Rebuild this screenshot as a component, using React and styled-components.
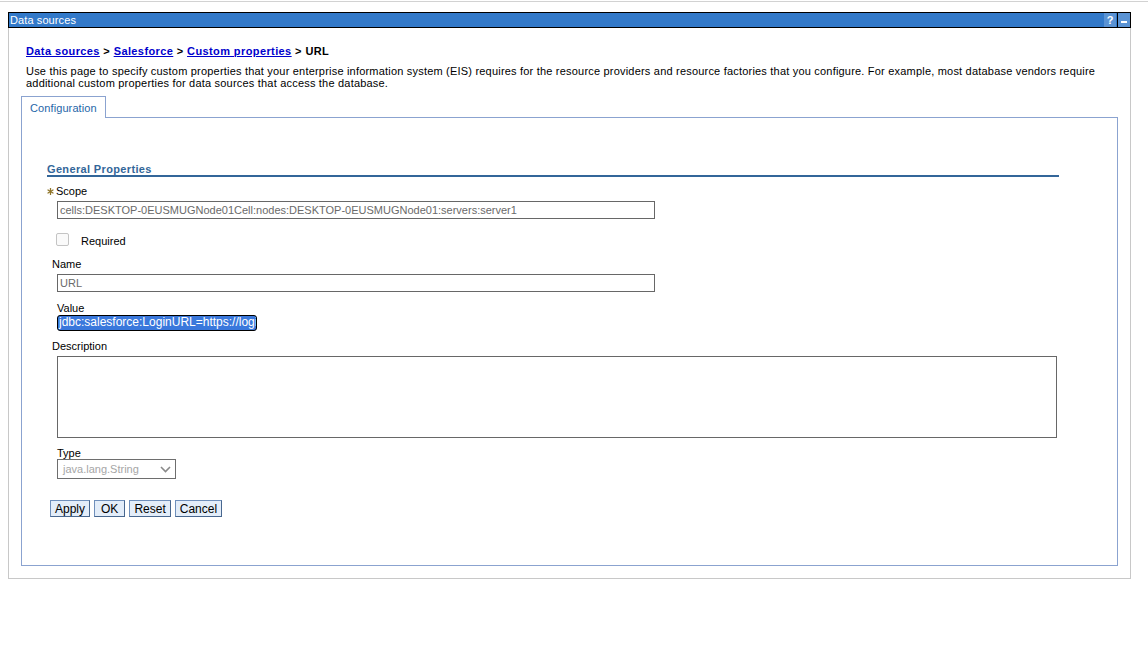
import React from 'react'
import styled, { createGlobalStyle } from 'styled-components'

const GlobalStyle = createGlobalStyle`
    body {
        margin: 0;
        background: #ffffff;
        font-family: Tahoma, 'Liberation Sans', Arial, sans-serif;
        font-size: 11px;
        line-height: 12px;
        color: #000000;
    }
`;

const TopRule = styled.div`
    margin-top: 1px;
    height: 1px;
    background: #d2d2d2;
`;

const Portlet = styled.div`
    margin: 10px 0 0 8px;
    width: 1123px;
`;

const TitleBar = styled.div`
    height: 16px;
    box-sizing: border-box;
    background: #3279c9;
    border: 1px solid #000000;
    display: flex;
    align-items: center;
    justify-content: space-between;
    color: #ffffff;
    padding-left: 1px;
`;

const TitleText = styled.span`
    font-size: 11px;
    letter-spacing: 0.1px;
`;

const TitleIcons = styled.div`
    display: flex;
    height: 100%;
    align-items: stretch;
`;

const TitleIcon = styled.div`
    width: 12px;
    background: #5a93d4;
    color: #ffffff;
    font-weight: bold;
    font-size: 11px;
    display: flex;
    align-items: ${p => (p.$bottom ? 'flex-end' : 'center')};
    justify-content: center;
    border-left: ${p => (p.$divider ? '1px solid #000' : 'none')};
    margin-left: ${p => (p.$divider ? '1px' : '0')};
`;

const Dash = styled.div`
    width: 6px;
    height: 2px;
    background: #ffffff;
    margin-bottom: 4px;
`;

const Body = styled.div`
    border: 1px solid #c8c8c8;
    border-top: none;
    padding: 17px 12px 12px 12px;
`;

const Crumbs = styled.div`
    margin-left: 5px;
    font-weight: bold;
    letter-spacing: 0.4px;
`;

const CrumbLink = styled.a`
    color: #0000cc;
    text-decoration: underline;
    cursor: pointer;
`;

const Intro = styled.p`
    margin: 8px 0 0 5px;
    letter-spacing: 0.2px;
`;

const TabRow = styled.div`
    display: flex;
    margin-top: 7px;
`;

const Tab = styled.div`
    position: relative;
    z-index: 1;
    width: 85px;
    height: 22px;
    box-sizing: border-box;
    border: 1px solid #8ba3d0;
    border-bottom: none;
    background: #ffffff;
    color: #1f66a8;
    padding: 5px 0 0 8px;
    margin-bottom: -1px;
    letter-spacing: 0.1px;
`;

const TabBox = styled.div`
    height: 449px;
    box-sizing: border-box;
    border: 1px solid #8ba3d0;
    padding: 45px 58px 0 25px;
`;

const SectionTitle = styled.div`
    font-weight: bold;
    color: #336699;
    letter-spacing: 0.35px;
    border-bottom: 2px solid #336699;
`;

const Label = styled.div`
    margin-top: ${p => p.$top}px;
    margin-left: ${p => p.$indent}px;
    display: flex;
    align-items: center;
`;

const RequiredMark = styled.span`
    width: 9px;
    display: flex;
    align-items: center;
`;

const TextBox = styled.div`
    margin: 4px 0 0 10px;
    width: ${p => p.$width}px;
    height: ${p => p.$height}px;
    box-sizing: border-box;
    border: 1px solid #676767;
    color: #6a6a6a;
    padding: 2px 0 0 2px;
    white-space: nowrap;
    overflow: hidden;
`;

const SelectedBox = styled.div`
    margin: 1px 0 0 10px;
    width: 200px;
    height: 16px;
    box-sizing: border-box;
    border: 1px solid #000000;
    border-radius: 3px;
    background: #3a78dc;
    color: #ffffff;
    font-size: 12px;
    line-height: 13px;
    padding: 0 0 0 1px;
    white-space: nowrap;
    overflow: hidden;
`;

const CheckRow = styled.div`
    margin: 14px 0 0 9px;
    height: 13px;
    display: flex;
    align-items: flex-end;
`;

const Check = styled.span`
    align-self: stretch;
    width: 13px;
    box-sizing: border-box;
    border: 1px solid #c4c4c4;
    border-radius: 2px;
    background: #fafafa;
`;

const CheckText = styled.span`
    margin-left: 12px;
    margin-bottom: -1px;
`;

const Select = styled.div`
    margin-left: 10px;
    width: 119px;
    height: 20px;
    box-sizing: border-box;
    border: 1px solid #6e6e6e;
    color: #a6a6a6;
    display: flex;
    align-items: center;
    justify-content: space-between;
    padding: 0 4px 0 5px;
`;

const Buttons = styled.div`
    margin: 21px 0 0 3px;
    display: flex;
    gap: 4px;
`;

const Button = styled.button`
    height: 17px;
    box-sizing: border-box;
    padding: 0 ${p => p.$pad || 4}px;
    font-family: 'Liberation Sans', Arial, sans-serif;
    font-size: 12px;
    line-height: 14px;
    color: #000000;
    background: #e3edf9;
    border: 1px solid #6f8fbb;
    border-right-color: #48678f;
    border-bottom-color: #48678f;
    border-radius: 0;
    cursor: pointer;
`;

const Chevron = () => (
    <svg width="11" height="7" viewBox="0 0 11 7">
        <path d="M1 1 L5.5 5.5 L10 1" fill="none" stroke="#8a8a8a" strokeWidth="1.6" />
    </svg>
);

const Asterisk = () => (
    <svg width="7" height="7" viewBox="0 0 7 7">
        <g stroke="#8f7428" strokeWidth="1.3" strokeLinecap="round">
            <path d="M3.5 0.6 V6.4" />
            <path d="M1 2 L6 5" />
            <path d="M1 5 L6 2" />
        </g>
    </svg>
);

const App = () => {
    return (
        <>
            <GlobalStyle />
            <TopRule />
            <Portlet>
                <TitleBar>
                    <TitleText>Data sources</TitleText>
                    <TitleIcons>
                        <TitleIcon>?</TitleIcon>
                        <TitleIcon $divider $bottom><Dash /></TitleIcon>
                    </TitleIcons>
                </TitleBar>
                <Body>
                    <Crumbs>
                        <CrumbLink>Data sources</CrumbLink> &gt; <CrumbLink>Salesforce</CrumbLink> &gt; <CrumbLink>Custom properties</CrumbLink> &gt; URL
                    </Crumbs>
                    <Intro>
                        Use this page to specify custom properties that your enterprise information system (EIS) requires for the resource providers and resource factories that you configure. For example, most database vendors require
                        <br />
                        additional custom properties for data sources that access the database.
                    </Intro>
                    <TabRow>
                        <Tab>Configuration</Tab>
                    </TabRow>
                    <TabBox>
                        <SectionTitle>General Properties</SectionTitle>

                        <Label $top={8} $indent={0}>
                            <RequiredMark><Asterisk /></RequiredMark>Scope
                        </Label>
                        <TextBox $width={598} $height={18}>
                            cells:DESKTOP-0EUSMUGNode01Cell:nodes:DESKTOP-0EUSMUGNode01:servers:server1
                        </TextBox>

                        <CheckRow>
                            <Check />
                            <CheckText>Required</CheckText>
                        </CheckRow>

                        <Label $top={12} $indent={5}>Name</Label>
                        <TextBox $width={598} $height={18}>URL</TextBox>

                        <Label $top={10} $indent={10}>Value</Label>
                        <SelectedBox>jdbc:salesforce:LoginURL=https://login.salesforce.com</SelectedBox>

                        <Label $top={9} $indent={5}>Description</Label>
                        <TextBox $width={1000} $height={82} />

                        <Label $top={9} $indent={10}>Type</Label>
                        <Select>
                            java.lang.String
                            <Chevron />
                        </Select>

                        <Buttons>
                            <Button>Apply</Button>
                            <Button $pad={6}>OK</Button>
                            <Button>Reset</Button>
                            <Button>Cancel</Button>
                        </Buttons>
                    </TabBox>
                </Body>
            </Portlet>
        </>
    )
}

export default App
